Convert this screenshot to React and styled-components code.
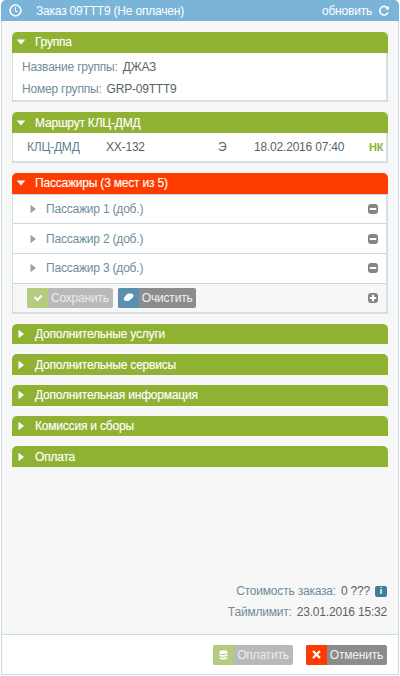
import React from "react";
import styled, { createGlobalStyle } from "styled-components";

const Global = createGlobalStyle`
  html, body { margin: 0; padding: 0; background: #fff; }
  body { font-family: "Liberation Sans", Arial, sans-serif; font-size: 12px; letter-spacing: -0.2px; }
`;

const Window = styled.div`
  width: 400px; height: 676px; box-sizing: border-box; display: flex; flex-direction: column;
  padding: 0 1px 1px 1px; overflow: hidden;
`;
const TitleBar = styled.header`
  height: 21px; flex: none; background: #7ab4d8; border-radius: 5px 5px 0 0; color: #fff;
  display: flex; align-items: center; padding: 0 9px 0 8px; font-size: 12px;
`;
const TitleText = styled.span` margin-left: 14px; flex: 1; `;
const Refresh = styled.span` display: flex; align-items: center; gap: 6px; `;
const Panel = styled.div`
  flex: 1; background: #f7f7f7; border: 1px solid #c9dbe2; border-top: 0; border-bottom: 0;
  padding: 11px 10px 0; display: flex; flex-direction: column; min-height: 0; box-sizing: border-box;
`;
const Section = styled.section` margin-bottom: 10px; `;
const SectionHead = styled.div`
  height: 20.7px; background: ${p => (p.$alert ? "#ff3c00" : "#90b233")}; color: #fff;
  border-radius: 5px 5px 0 0; display: flex; align-items: center; font-size: 12px;
  padding-left: 4px; box-sizing: border-box; text-shadow: 0 0 1px rgba(255,255,255,.35);
`;
const HeadLabel = styled.span` margin-left: 9px; `;
const SectionBody = styled.div`
  background: ${p => p.$bg || "#fff"}; border: 1px solid #d4e0e5; border-top: ${p => (p.$line ? "1px solid #c9dbe2" : "0")};
  border-right-width: 2px; border-bottom-width: 2px;
`;
const InfoRow = styled.div`
  height: 22px; display: flex; align-items: center; padding-left: 9px; color: #6f8c9a;
`;
const Value = styled.span` color: #596367; margin-left: 5px; `;
const GroupBody = styled.div` padding: 3px 0 0.5px; `;
const RouteRow = styled.div`
  height: 28px; display: grid; align-items: center; color: #5e7f90;
  grid-template-columns: 79px 112px 36px 115px 1fr; padding-left: 14px; padding-right: 7px;
`;
const Cell = styled.span`
  color: ${p => p.$c || "#596367"};
  ${p => (p.$b ? "font-weight:700;font-size:11px;" : "")}
  ${p => (p.$r ? "text-align:right;" : "")}
`;
const PaxRow = styled.div`
  height: 29.7px; box-sizing: border-box; display: flex; align-items: center; padding: 0 8px 0 15px; color: #6f8c9a;
  border-bottom: 1px solid #c9dbe2; background: #fff;
`;
const PaxLabel = styled.span` flex: 1; margin-left: 8px; `;
const ActionRow = styled.div`
  height: 28px; display: flex; align-items: center; padding: 0 8px 0 14px; gap: 5px; background: #f7f7f7;
`;
const Spacer = styled.div` flex: 1; `;
const Btn = styled.button`
  border: 0; padding: 0; height: 20px; display: inline-flex; border-radius: 2px; overflow: hidden;
  font: inherit; letter-spacing: inherit; color: ${p => (p.$off ? "#ececec" : "#f2f2f2")};
  background: ${p => (p.$off ? "#b9b9b9" : "#8c8c8c")};
  align-items: stretch;
`;
const BtnIcon = styled.span`
  width: 21px; display: flex; align-items: center; justify-content: center; background: ${p => p.$c};
`;
const BtnLabel = styled.span` padding: 0 4px 0 3px; line-height: 20px; `;
const Summary = styled.div`
  margin-top: auto; display: flex; flex-direction: column; align-items: flex-end; padding: 0 1px 15px 0; gap: 7px;
`;
const SummaryRow = styled.div` color: #6f8c9a; display: flex; align-items: center; height: 14px; `;
const InfoBadge = styled.span`
  width: 12px; height: 11px; margin-left: 5px; border-radius: 2px; background: #417f99; color: #fff;
  font: bold 9px "Liberation Sans", sans-serif;
  display: flex; align-items: center; justify-content: center;
`;
const Footer = styled.footer`
  height: 41px; flex: none; background: #fff; border: 1px solid #c9dbe2; box-sizing: border-box;
  display: flex; align-items: center; justify-content: flex-end; gap: 13px; padding: 0 11px 0 0;
`;

const Tri = ({ open, color = "#fff" }) => (
  <svg width="10" height="10" viewBox="0 0 10 10">
    {open ? <path d="M.7 2.5h8.6L5 7.5z" fill={color} /> : <path d="M2.5 .7l5.5 4.3-5.5 4.3z" fill={color} />}
  </svg>
);
const Clock = () => (
  <svg width="13" height="13" viewBox="0 0 13 13" fill="none" stroke="#fff" strokeWidth="1.5">
    <circle cx="6.5" cy="6.5" r="5.4" /><path d="M6.5 3.2v3.5l2.2 1.3" strokeWidth="1.1" />
  </svg>
);
const Reload = () => (
  <svg width="12" height="12" viewBox="0 0 11 11" fill="none" stroke="#fff" strokeWidth="1.4">
    <path d="M9.3 6.8A4 4 0 1 1 8.6 2.6L9.6 3.6" /><path d="M10 .8v3.4H6.6z" fill="#fff" stroke="none" />
  </svg>
);
const Round = ({ plus }) => (
  <svg width="10" height="10" viewBox="0 0 10 10">
    <rect width="10" height="10" rx="3" fill="#858585" />
    <path d={plus ? "M1.8 5h6.4M5 1.8v6.4" : "M1.8 5h6.4"} stroke="#fff" strokeWidth="2" />
  </svg>
);
const Check = () => (
  <svg width="10" height="10" viewBox="0 0 10 10" fill="none" stroke="#fff" strokeWidth="2"><path d="M1.5 4l3 3 4-4.5" /></svg>
);
const Eraser = () => (
  <svg width="11" height="9" viewBox="0 0 11 9"><path d="M3.5 1.5C5 .3 8.5 0 10 1.3c1 1.2 .5 3-1.3 4.2L6 7.7C4 8.5 1.5 8 .8 6.8 .3 5.6 1.5 4 3.5 1.5z" fill="#fff" /></svg>
);
const Coins = () => (
  <svg width="9" height="10" viewBox="0 0 11 12" fill="#fff"><ellipse cx="5.5" cy="2.5" rx="5" ry="2.3" /><path d="M.5 4.5c1 2 9 2 10 0v2c-1 2-9 2-10 0zM.5 8c1 2 9 2 10 0v1.6c-1 2.4-9 2.4-10 0z" /></svg>
);
const Cross = () => (
  <svg width="9" height="9" viewBox="0 0 9 9" stroke="#fff" strokeWidth="2.2"><path d="M1 1l7 7M8 1L1 8" /></svg>
);

const Collapsed = ({ title }) => (
  <Section>
    <SectionHead><Tri /><HeadLabel>{title}</HeadLabel></SectionHead>
  </Section>
);

export default function App() {
  return (
    <Window>
      <Global />
      <TitleBar>
        <Clock />
        <TitleText>Заказ 09ТТТ9 (Не оплачен)</TitleText>
        <Refresh>обновить <Reload /></Refresh>
      </TitleBar>
      <Panel>
        <Section>
          <SectionHead><Tri open /><HeadLabel>Группа</HeadLabel></SectionHead>
          <SectionBody>
            <GroupBody>
              <InfoRow>Название группы:<Value>ДЖАЗ</Value></InfoRow>
              <InfoRow>Номер группы:<Value>GRP-09TTT9</Value></InfoRow>
            </GroupBody>
          </SectionBody>
        </Section>
        <Section>
          <SectionHead><Tri open /><HeadLabel>Маршрут КЛЦ-ДМД</HeadLabel></SectionHead>
          <SectionBody>
            <RouteRow>
              <Cell $c="#5e7f90">КЛЦ-ДМД</Cell>
              <Cell>ХХ-132</Cell>
              <Cell>Э</Cell>
              <Cell>18.02.2016 07:40</Cell>
              <Cell $c="#90b233" $b $r>НК</Cell>
            </RouteRow>
          </SectionBody>
        </Section>
        <Section>
          <SectionHead $alert><Tri open /><HeadLabel>Пассажиры (3 мест из 5)</HeadLabel></SectionHead>
          <SectionBody $bg="#f7f7f7" $line>
            {[1, 2, 3].map(n => (
              <PaxRow key={n}>
                <Tri color="#a0a0a0" />
                <PaxLabel>Пассажир {n} (доб.)</PaxLabel>
                <Round />
              </PaxRow>
            ))}
            <ActionRow>
              <Btn $off><BtnIcon $c="#b5cc80"><Check /></BtnIcon><BtnLabel>Сохранить</BtnLabel></Btn>
              <Btn><BtnIcon $c="#5b8fb0"><Eraser /></BtnIcon><BtnLabel>Очистить</BtnLabel></Btn>
              <Spacer />
              <Round plus />
            </ActionRow>
          </SectionBody>
        </Section>
        <Collapsed title="Дополнительные услуги" />
        <Collapsed title="Дополнительные сервисы" />
        <Collapsed title="Дополнительная информация" />
        <Collapsed title="Комиссия и сборы" />
        <Collapsed title="Оплата" />
        <Summary>
          <SummaryRow>Стоимость заказа:<Value>0 ???</Value><InfoBadge>i</InfoBadge></SummaryRow>
          <SummaryRow>Таймлимит:<Value>23.01.2016 15:32</Value></SummaryRow>
        </Summary>
      </Panel>
      <Footer>
        <Btn $off><BtnIcon $c="#b5cc80"><Coins /></BtnIcon><BtnLabel>Оплатить</BtnLabel></Btn>
        <Btn><BtnIcon $c="#ff3c00"><Cross /></BtnIcon><BtnLabel>Отменить</BtnLabel></Btn>
      </Footer>
    </Window>
  );
}
